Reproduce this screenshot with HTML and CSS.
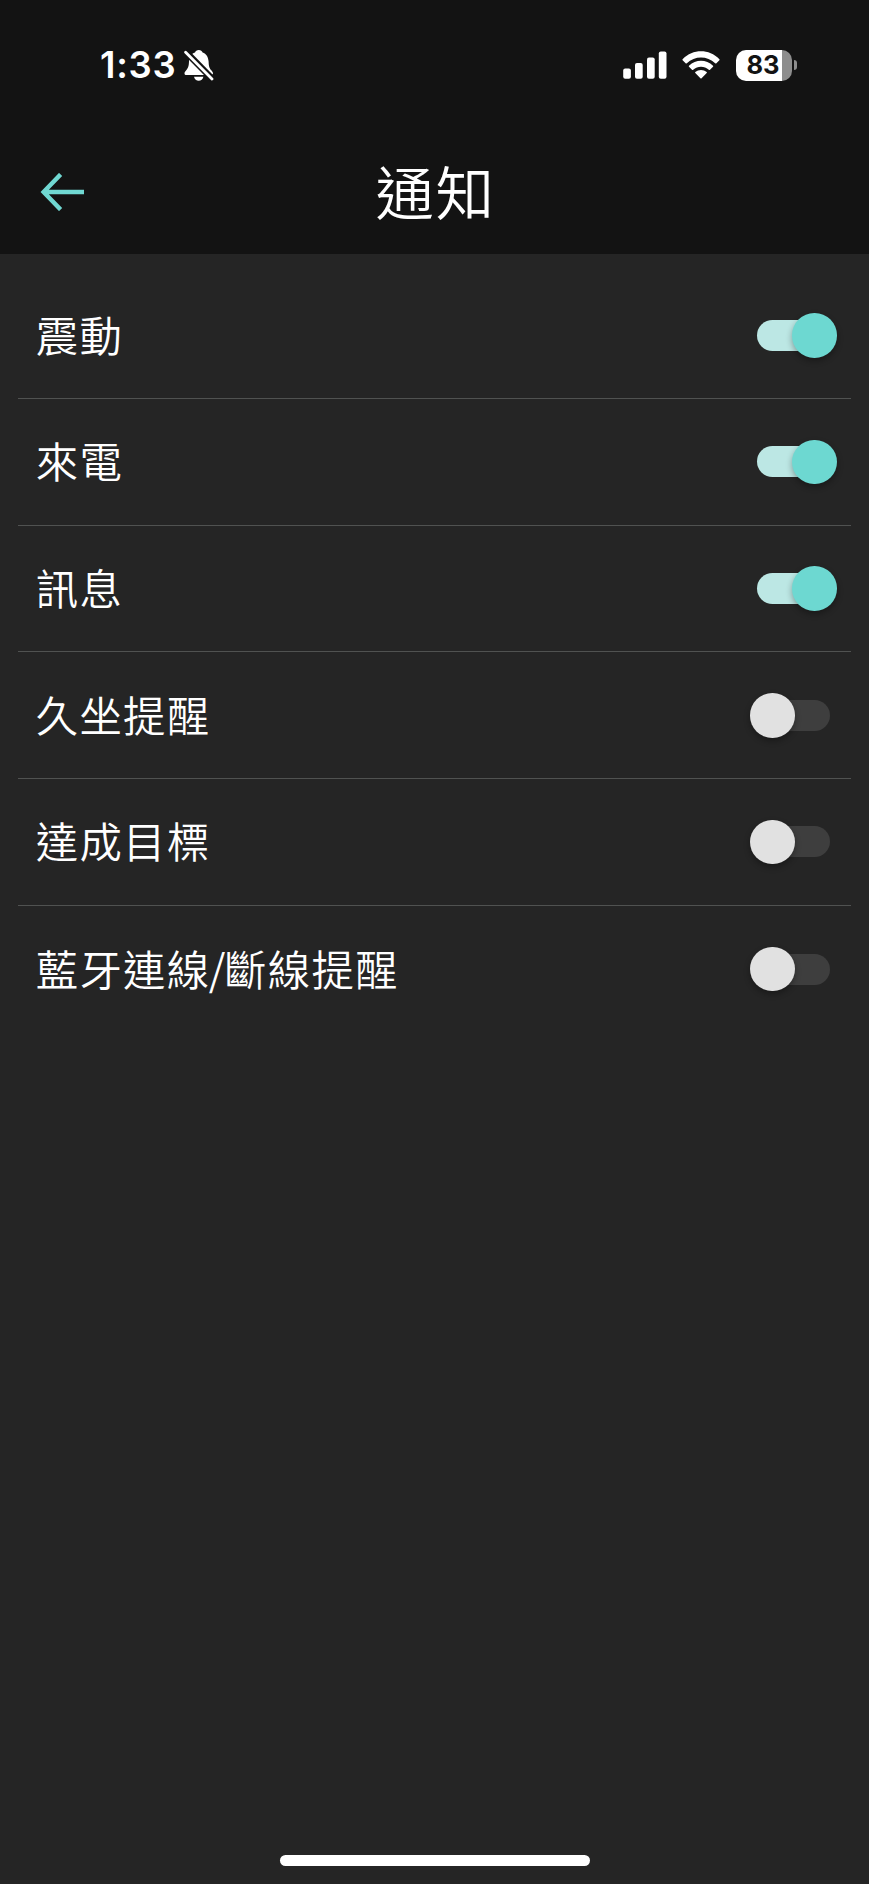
FILE: index.html
```html
<!DOCTYPE html>
<html lang="zh-Hant">
<head>
<meta charset="utf-8">
<title>通知</title>
<link rel="stylesheet" href="styles.css">
</head>
<body>
<div class="screen">
  <header class="header">
    <div class="status">
      <span class="time">1:33</span>
      <svg class="bell" width="30" height="33" viewBox="0 0 30 33">
        <path fill="#fff" d="M14.8 1C12.8 1 11.5 2 11 3.4C7.2 4.6 5.2 8 5 12.5C4.8 17 4.3 18.6 2.4 21C1.3 22.4.5 23.2.5 24.4C.5 25.5 1.3 26 2.5 26H27C28.2 26 29 25.4 29 24.3C29 23.1 28 22.2 27 21C25.2 18.6 24.8 17 24.6 12.5C24.3 8 22.3 4.6 18.6 3.4C18 2 16.8 1 14.8 1ZM10 27.8H19.4C18.8 30.4 17 31.8 14.7 31.8S10.6 30.4 10 27.8Z"/>
        <path class="bell-gap" d="M-1 0L31 32.6"/>
        <path class="bell-slash" d="M1.6 3.2L28 30"/>
      </svg>
      <div class="indicators">
        <svg class="signal" width="44" height="28" viewBox="0 0 44 28">
          <g fill="#fff"><rect x="0.2" y="17.4" width="7.7" height="10.4" rx="2"/><rect x="12" y="12" width="7.7" height="15.8" rx="2"/><rect x="24" y="6.4" width="7.7" height="21.4" rx="2"/><rect x="35.8" y="0.4" width="7.7" height="27.4" rx="2"/></g>
        </svg>
        <svg class="wifi" width="38" height="28" viewBox="0 0 38 28">
          <g fill="#fff"><path d="M.6 8.2C11 -2.3 27 -2.3 37.4 8.2Q37.8 8.7 37.4 9.2L34.4 12.2Q33.8 12.7 33.2 12.2C25.2 4.5 12.8 4.5 4.8 12.2Q4.2 12.7 3.6 12.2L.6 9.2Q.2 8.7 .6 8.2Z"/><path d="M7 14.7C13.8 8.2 24.2 8.2 31 14.7Q31.5 15.2 31 15.7L28 18.7Q27.4 19.2 26.8 18.7C22.4 14.7 15.6 14.7 11.2 18.7Q10.6 19.2 10 18.7L7 15.7Q6.5 15.2 7 14.7Z"/><path d="M13.3 21.1C16.5 18.3 21.5 18.3 24.7 21.1Q25.2 21.6 24.7 22.1L19.6 27.2Q19 27.8 18.4 27.2L13.3 22.1Q12.8 21.6 13.3 21.1Z"/></g>
        </svg>
        <div class="battery"><div class="battery-body">83</div><div class="battery-nub"></div></div>
      </div>
    </div>
    <div class="navbar">
      <svg class="back" width="44" height="38" viewBox="0 0 44 38"><path d="M20.6 1.4L3.6 19L20.6 36.6M3.9 19H44"/></svg>
      <h1 class="title">通知</h1>
    </div>
  </header>
  <main class="list">
    <div class="row"><span class="label">震動</span><div class="switch on"><i class="knob"></i></div></div>
    <div class="row"><span class="label">來電</span><div class="switch on"><i class="knob"></i></div></div>
    <div class="row"><span class="label">訊息</span><div class="switch on"><i class="knob"></i></div></div>
    <div class="row"><span class="label">久坐提醒</span><div class="switch"><i class="knob"></i></div></div>
    <div class="row"><span class="label">達成目標</span><div class="switch"><i class="knob"></i></div></div>
    <div class="row"><span class="label">藍牙連線<span class="slash">/</span>斷線提醒</span><div class="switch"><i class="knob"></i></div></div>
  </main>
  <div class="home-bar"></div>
</div>
</body>
</html>
```
FILE: styles.css
```css
* { box-sizing: border-box; }
body { margin: 0; background: #252525; }
.screen {
  width: 869px;
  height: 1884px;
  display: flex;
  flex-direction: column;
  background: #252525;
  color: #fff;
  font-family: "Noto Sans CJK TC", sans-serif;
  overflow: hidden;
}
.header { height: 254px; background: #131313; flex: none; }
.status {
  height: 130px;
  padding: 0 72px 0 100px;
  display: flex;
  align-items: center;
}
.time {
  width: 84px;
  font: 600 36.5px/40px Inter, sans-serif;
  letter-spacing: .7px;
  white-space: nowrap;
}
.bell-gap { stroke: #131313; stroke-width: 6.5; fill: none; }
.bell-slash { stroke: #fff; stroke-width: 2.8; stroke-linecap: round; }
.indicators { margin-left: auto; display: flex; align-items: center; }
.wifi { margin: 0 16px 0 15px; }
.battery { display: flex; align-items: center; gap: 2px; }
.battery-body {
  width: 56px;
  height: 31px;
  padding-right: 2px;
  border-radius: 10px;
  background: linear-gradient(90deg, #fff 46px, #8d8d8d 46px);
  color: #131313;
  font: 700 25.5px/30px Inter, sans-serif;
  text-align: center;
}
.battery-nub { width: 3px; height: 10px; border-radius: 0 4px 4px 0; background: #8d8d8d; }
.navbar {
  height: 124px;
  padding: 0 40px;
  display: grid;
  grid-template-columns: 44px 1fr 44px;
  align-items: start;
}
.back { margin-top: 43px; fill: none; stroke: #70d8d2; stroke-width: 4.4; }
.title {
  margin: 17px 0 0;
  padding-left: 2px;
  font-size: 58.5px;
  line-height: 86px;
  font-weight: 350;
  letter-spacing: 1.5px;
  text-align: center;
}
.list { padding: 18.4px 17.7px 0; flex: 1; }
.row {
  height: 126.7px;
  padding: 0 21px 0 18px;
  display: flex;
  align-items: center;
  justify-content: space-between;
  border-bottom: 1px solid #505251;
}
.row:last-child { border-bottom: 0; }
.label {
  padding-bottom: 3px;
  font-size: 42.4px;
  line-height: 60px;
  font-weight: 350;
  letter-spacing: 1.3px;
}
.slash { margin: 0 -2.7px 0 -1.7px; }
.switch {
  width: 73.5px;
  height: 31px;
  display: flex;
  align-items: center;
  border-radius: 16px;
  background: #3e3e3e;
}
.switch.on { background: #bce7e4; justify-content: flex-end; }
.knob {
  flex: none;
  width: 44.6px;
  height: 44.6px;
  margin: 0 -6.4px;
  border-radius: 50%;
  background: #e1e1e1;
  box-shadow: 0 3px 6px rgba(0, 0, 0, .32);
}
.on .knob { background: #6dd8d1; }
.home-bar {
  width: 310px;
  height: 11px;
  margin: 0 0 18px 280px;
  border-radius: 6px;
  background: #fff;
}
```
